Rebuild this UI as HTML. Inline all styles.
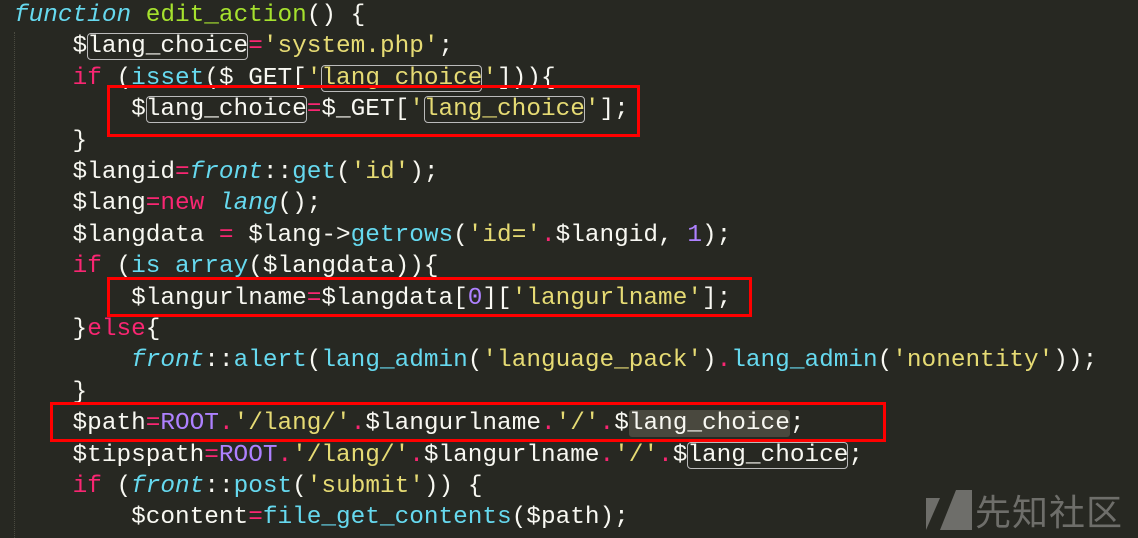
<!DOCTYPE html>
<html><head><meta charset="utf-8"><style>
html,body{margin:0;padding:0;background:#272822;width:1138px;height:538px;overflow:hidden;position:relative}
.l{position:absolute;left:14px;white-space:pre;font-family:"Liberation Mono","DejaVu Sans Mono",monospace;font-size:24.4px;line-height:31.4px;color:#f8f8f2}
.k{color:#f92672}.g{color:#a6e22e}.c{color:#66d9ef}.i{color:#66d9ef;font-style:italic}.y{color:#e6db74}.p{color:#ae81ff}
.b{outline:1.5px solid #bbb;outline-offset:-1px;border-radius:4px}
.hl{background:#49483e;border-radius:3px}
.r{position:absolute;border:3px solid #f00;box-sizing:border-box}
.guide{position:absolute;left:14px;width:0;border-left:1px dotted #4a4a40}
</style></head><body>
<div class="guide" style="top:32px;height:506px"></div>
<div class="l" style="top:0px"><span class="i">function</span> <span class="g">edit_action</span>() {</div>
<div class="l" style="top:31.4px">    $<span class="b">lang_choice</span><span class="k">=</span><span class="y">'system.php'</span>;</div>
<div class="l" style="top:62.8px">    <span class="k">if</span> (<span class="c">isset</span>($ GET[<span class="y">'<span class="b">lang choice</span>'</span>])){</div>
<div class="l" style="top:94.2px">        $<span class="b">lang_choice</span><span class="k">=</span>$_GET[<span class="y">'<span class="b">lang_choice</span>'</span>];</div>
<div class="l" style="top:125.6px">    }</div>
<div class="l" style="top:157px">    $langid<span class="k">=</span><span class="i">front</span>::<span class="c">get</span>(<span class="y">'id'</span>);</div>
<div class="l" style="top:188.4px">    $lang<span class="k">=new</span> <span class="i">lang</span>();</div>
<div class="l" style="top:219.8px">    $langdata <span class="k">=</span> $lang-><span class="c">getrows</span>(<span class="y">'id='</span><span class="k">.</span>$langid, <span class="p">1</span>);</div>
<div class="l" style="top:251.2px">    <span class="k">if</span> (<span class="c">is array</span>($langdata)){</div>
<div class="l" style="top:282.6px">        $langurlname<span class="k">=</span>$langdata[<span class="p">0</span>][<span class="y">'langurlname'</span>];</div>
<div class="l" style="top:314px">    }<span class="k">else</span>{</div>
<div class="l" style="top:345.4px">        <span class="i">front</span>::<span class="c">alert</span>(<span class="c">lang_admin</span>(<span class="y">'language_pack'</span>)<span class="k">.</span><span class="c">lang_admin</span>(<span class="y">'nonentity'</span>));</div>
<div class="l" style="top:376.8px">    }</div>
<div class="l" style="top:408.2px">    $path<span class="k">=</span><span class="p">ROOT</span><span class="k">.</span><span class="y">'/lang/'</span><span class="k">.</span>$langurlname<span class="k">.</span><span class="y">'/'</span><span class="k">.</span>$<span class="hl">lang_choice</span>;</div>
<div class="l" style="top:439.6px">    $tipspath<span class="k">=</span><span class="p">ROOT</span><span class="k">.</span><span class="y">'/lang/'</span><span class="k">.</span>$langurlname<span class="k">.</span><span class="y">'/'</span><span class="k">.</span>$<span class="b">lang_choice</span>;</div>
<div class="l" style="top:471px">    <span class="k">if</span> (<span class="i">front</span>::<span class="c">post</span>(<span class="y">'submit'</span>)) {</div>
<div class="l" style="top:502.4px">        $content<span class="k">=</span><span class="c">file_get_contents</span>($path);</div>
<div class="r" style="left:107px;top:85px;width:533px;height:52px"></div>
<div class="r" style="left:107px;top:277px;width:645px;height:40px"></div>
<div class="r" style="left:50px;top:402px;width:836px;height:40px"></div>
<svg style="position:absolute;left:926px;top:490px" width="46" height="42"><polygon points="0,8 14,8 0,40" fill="#6e6e6a"/><polygon points="30,0 46,0 46,40 14,40" fill="#6e6e6a"/></svg>
<div style="position:absolute;left:975px;top:488px;font-family:'Noto Sans CJK SC',sans-serif;font-size:36px;line-height:44px;color:#6e6e6a;letter-spacing:1px">先知社区</div>
</body></html>
